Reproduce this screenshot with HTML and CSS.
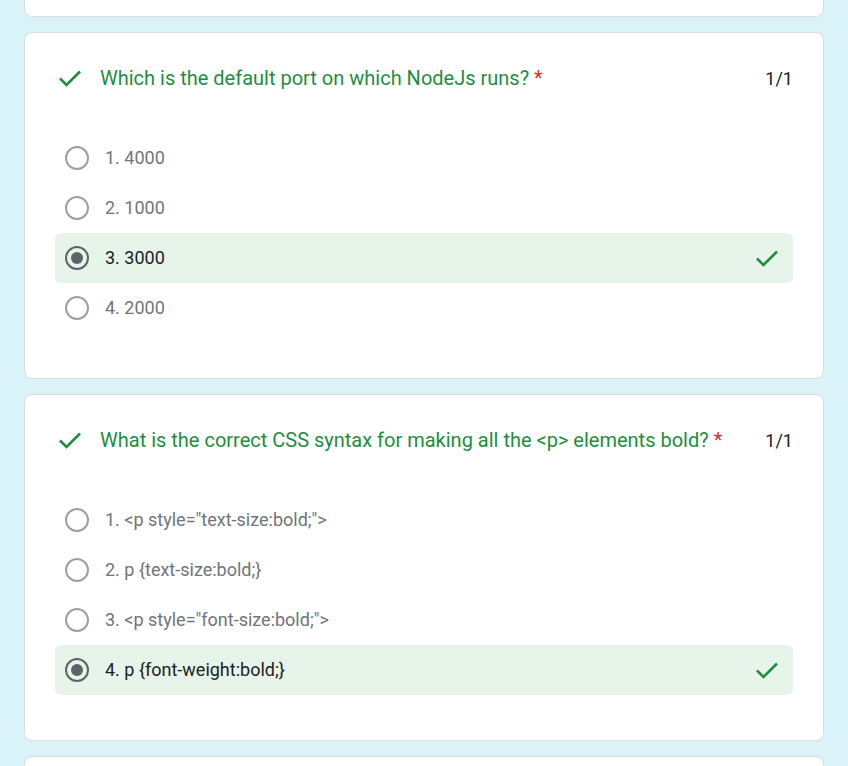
FILE: index.html
```html
<!DOCTYPE html>
<html lang="en">
<head>
<meta charset="utf-8">
<title>Quiz results</title>
<link rel="stylesheet" href="styles.css">
</head>
<body>
<main class="page">
  <section class="card card--partial"></section>

  <section class="card">
    <header class="q-head">
      <svg class="check" viewBox="0 0 24 18" width="24" height="18"><polyline points="2,9.5 8.5,16 22,2.5" /></svg>
      <h2 class="q-title">Which is the default port on which NodeJs runs? <span class="req">*</span></h2>
      <span class="score">1/1</span>
    </header>
    <ul class="options">
      <li class="opt"><span class="radio"></span><span class="opt-text">1. 4000</span></li>
      <li class="opt"><span class="radio"></span><span class="opt-text">2. 1000</span></li>
      <li class="opt opt--correct"><span class="radio radio--on"></span><span class="opt-text">3. 3000</span>
        <svg class="check check--opt" viewBox="0 0 24 18" width="24" height="18"><polyline points="2,9.5 8.5,16 22,2.5" /></svg></li>
      <li class="opt"><span class="radio"></span><span class="opt-text">4. 2000</span></li>
    </ul>
  </section>

  <section class="card">
    <header class="q-head">
      <svg class="check" viewBox="0 0 24 18" width="24" height="18"><polyline points="2,9.5 8.5,16 22,2.5" /></svg>
      <h2 class="q-title">What is the correct CSS syntax for making all the &lt;p&gt; elements bold? <span class="req">*</span></h2>
      <span class="score">1/1</span>
    </header>
    <ul class="options">
      <li class="opt"><span class="radio"></span><span class="opt-text">1. &lt;p style="text-size:bold;"&gt;</span></li>
      <li class="opt"><span class="radio"></span><span class="opt-text">2. p {text-size:bold;}</span></li>
      <li class="opt"><span class="radio"></span><span class="opt-text">3. &lt;p style="font-size:bold;"&gt;</span></li>
      <li class="opt opt--correct"><span class="radio radio--on"></span><span class="opt-text">4. p {font-weight:bold;}</span>
        <svg class="check check--opt" viewBox="0 0 24 18" width="24" height="18"><polyline points="2,9.5 8.5,16 22,2.5" /></svg></li>
    </ul>
  </section>

  <section class="card card--tail"></section>
</main>
</body>
</html>
```
FILE: styles.css
```css
* { box-sizing: border-box; }
html, body { margin: 0; padding: 0; }
body {
  background: #d9f3f8;
  font-family: Roboto, "Liberation Sans", Arial, sans-serif;
  color: #202124;
  height: 766px;
  overflow: hidden;
}
.page {
  width: 800px;
  margin: 0 auto;
  display: flex;
  flex-direction: column;
  gap: 15px;
}
.card {
  background: #fff;
  border: 1px solid #dadce0;
  border-radius: 8px;
  padding: 33px 30px 45px;
  min-height: 347px;
}
.card--partial {
  min-height: 0;
  height: 17px;
  padding: 0;
  border-top: none;
  border-radius: 0 0 8px 8px;
}
.card--tail {
  min-height: 0;
  height: 10px;
  padding: 0;
  border-bottom: none;
  border-radius: 8px 8px 0 0;
}
.q-head {
  display: flex;
  align-items: center;
  height: 24px;
}
.check {
  flex: none;
  fill: none;
  stroke: #1e8e3e;
  stroke-width: 2.6;
  stroke-linecap: butt;
  stroke-linejoin: miter;
}
.q-head .check { margin: 0 18px 0 3px; }
.q-title {
  flex: 1;
  margin: 0;
  font-size: 20px;
  font-weight: 400;
  color: #1e8e3e;
  line-height: 24px;
}
.req { color: #d93025; }
.score {
  flex: none;
  font-size: 18px;
  color: #202124;
  margin-left: 16px;
}
.options {
  list-style: none;
  margin: 43px 0 0;
  padding: 0;
}
.opt {
  display: flex;
  align-items: center;
  height: 50px;
  padding: 0 14px 0 10px;
  border-radius: 6px;
}
.opt--correct { background: #e6f4ea; }
.radio {
  flex: none;
  width: 24px;
  height: 24px;
  border: 2px solid #9aa0a6;
  border-radius: 50%;
  margin-right: 16px;
  display: flex;
  align-items: center;
  justify-content: center;
}
.radio--on { border-color: #5f6368; }
.radio--on::after {
  content: "";
  width: 12px;
  height: 12px;
  border-radius: 50%;
  background: #5f6368;
}
.opt-text {
  flex: 1;
  font-size: 18px;
  line-height: 22px;
  color: #70757a;
  padding-bottom: 1px;
}
.opt--correct .opt-text { color: #202124; }
.check--opt { margin-left: auto; }
```
